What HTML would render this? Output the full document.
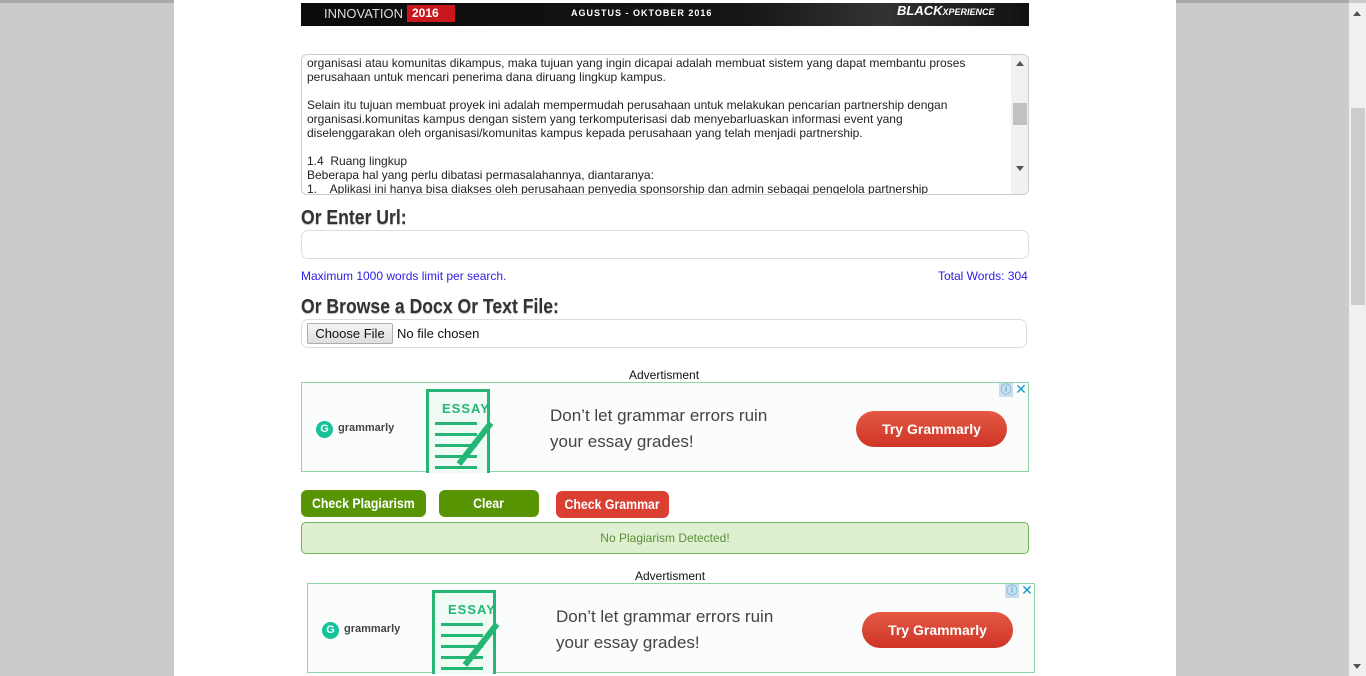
<!DOCTYPE html>
<html><head><meta charset="utf-8"><style>
*{margin:0;padding:0;box-sizing:border-box}
body{width:1366px;height:676px;overflow:hidden;background:#cbcbcb;font-family:"Liberation Sans",Arial,sans-serif;position:relative}
.a{position:absolute}
#page{left:174px;top:0;width:1002px;height:676px;background:#fff}
#topline{left:0;top:0;width:1349px;height:3px;background:#aaa}
#sb{left:1349px;top:3px;width:17px;height:673px;background:#f0f0f0}
.h{font-weight:bold;font-size:20px;color:#333;transform-origin:left top;transform:scaleX(0.88);white-space:nowrap;text-shadow:0 1px 1px #bbb}
.ad{border:1px solid #8fd3a8;background:#fbfdfc;width:728px;height:90px}
.btn{border-radius:6px;color:#fff;font-weight:bold;font-size:14px;text-align:center;line-height:27px;height:27px}
.btn span{display:inline-block;transform:scaleX(0.88)}
</style></head><body>
<div id="topline" class="a"></div>
<div id="page" class="a"></div>
<div id="sb" class="a"><div class="a" style="left:4px;top:8px;width:0;height:0;border-left:4px solid transparent;border-right:4px solid transparent;border-bottom:5px solid #555"></div><div class="a" style="left:2px;top:105px;width:14px;height:197px;background:#cdcdcd"></div><div class="a" style="left:4px;top:661px;width:0;height:0;border-left:4px solid transparent;border-right:4px solid transparent;border-top:5px solid #555"></div></div>

<div class="a" style="left:301px;top:3px;width:728px;height:23px;background:linear-gradient(90deg,#0b0b0b,#151515 60%,#333 80%,#111)">
<div class="a" style="left:23px;top:3px;color:#ddd;font-size:13px">INNOVATION</div>
<div class="a" style="left:106px;top:2px;width:48px;height:17px;background:#c8171d;color:#fff;font-weight:bold;font-size:12px;padding-left:5px;line-height:17px">2016</div>
<div class="a" style="left:270px;top:5px;color:#fff;font-weight:bold;font-size:9px;letter-spacing:1px">AGUSTUS - OKTOBER 2016</div>
<div class="a" style="left:596px;top:0px;color:#fff;font-weight:bold;font-style:italic;font-size:13px">BLACK<span style="font-size:9px">XPERIENCE</span></div>
</div>

<div class="a" style="left:301px;top:54px;width:728px;height:141px;border:1px solid #ccc;border-radius:6px;overflow:hidden;font-size:12px;line-height:14px;color:#222">
<div class="a" style="left:5px;top:1px;width:660px">organisasi atau komunitas dikampus, maka tujuan yang ingin dicapai adalah membuat sistem yang dapat membantu proses perusahaan untuk mencari penerima dana diruang lingkup kampus.<br><br>Selain itu tujuan membuat proyek ini adalah mempermudah perusahaan untuk melakukan pencarian partnership dengan organisasi.komunitas kampus dengan sistem yang terkomputerisasi dab menyebarluaskan informasi event yang diselenggarakan oleh organisasi/komunitas kampus kepada perusahaan yang telah menjadi partnership.<br><br>1.4&nbsp; Ruang lingkup<br>Beberapa hal yang perlu dibatasi permasalahannya, diantaranya:<br>1.&nbsp;&nbsp;&nbsp; Aplikasi ini hanya bisa diakses oleh perusahaan penyedia sponsorship dan admin sebagai pengelola partnership dengan</div>
<div class="a" style="left:709px;top:0;width:18px;height:140px;background:#f1f1f1"><div class="a" style="left:5px;top:6px;border-left:4px solid transparent;border-right:4px solid transparent;border-bottom:5px solid #555"></div><div class="a" style="left:2px;top:48px;width:14px;height:22px;background:#c1c1c1"></div><div class="a" style="left:5px;top:111px;border-left:4px solid transparent;border-right:4px solid transparent;border-top:5px solid #555"></div></div>
</div>

<div class="a h" style="left:301px;top:207px">Or Enter Url:</div>
<div class="a" style="left:301px;top:230px;width:728px;height:29px;border:1px solid #ddd;border-radius:7px"></div>
<div class="a" style="left:301px;top:269px;font-size:12px;color:#2a1ee6">Maximum 1000 words limit per search.</div>
<div class="a" style="left:938px;top:269px;font-size:12px;color:#2a1ee6">Total Words: 304</div>
<div class="a h" style="left:301px;top:296px">Or Browse a Docx Or Text File:</div>
<div class="a" style="left:301px;top:319px;width:726px;height:29px;border:1px solid #ddd;border-radius:7px"></div>
<div class="a" style="left:307px;top:323px;width:86px;height:21px;border:1px solid #adadad;border-radius:2px;background:linear-gradient(#f4f4f4,#dedede);font-size:13px;line-height:19px;text-align:center;color:#111">Choose File</div>
<div class="a" style="left:397px;top:326px;font-size:13px;color:#111">No file chosen</div>

<div class="a" style="left:629px;top:368px;font-size:12px;color:#111">Advertisment</div>
<div class="a ad" style="left:301px;top:382px">
<div class="a" style="left:14px;top:38px;width:17px;height:17px;border-radius:50%;background:#15c39a;color:#fff;font-weight:bold;font-size:11px;text-align:center;line-height:17px">G</div>
<div class="a" style="left:36px;top:39px;font-size:11px;font-weight:bold;color:#444">grammarly</div>
<div class="a" style="left:124px;top:6px;width:64px;height:84px;border:3px solid #25b574;border-bottom:none;background:#f0fbf5"></div>
<div class="a" style="left:140px;top:18px;color:#25b574;font-weight:bold;font-size:13px;letter-spacing:1px">ESSAY</div>
<div class="a" style="left:133px;top:39px;width:42px;height:3px;background:#25b574;box-shadow:0 11px 0 #25b574,0 22px 0 #25b574,0 33px 0 #25b574,0 44px 0 #25b574"></div>
<div class="a" style="left:186px;top:40px;width:6px;height:52px;background:#25b574;transform:rotate(38deg);transform-origin:top"></div>
<div class="a" style="left:248px;top:20px;font-size:17px;line-height:26px;color:#444">Don’t let grammar errors ruin<br>your essay grades!</div>
<div class="a" style="left:554px;top:28px;width:151px;height:36px;border-radius:18px;background:linear-gradient(#e35a44,#cf3426);color:#fff;font-weight:bold;font-size:14px;text-align:center;line-height:36px">Try Grammarly</div>
<div class="a" style="left:697px;top:0;width:14px;height:14px;background:#cde;color:#19c;font-size:11px;text-align:center;line-height:14px">ⓘ</div>
<div class="a" style="left:712px;top:-1px;width:14px;height:14px;color:#19c;font-size:14px;text-align:center;line-height:14px">✕</div>
</div>

<div class="a btn" style="left:301px;top:490px;width:125px;background:#579505"><span>Check Plagiarism</span></div>
<div class="a btn" style="left:439px;top:490px;width:100px;background:#579505"><span>Clear</span></div>
<div class="a btn" style="left:556px;top:491px;width:113px;background:#db3f31"><span>Check Grammar</span></div>
<div class="a" style="left:301px;top:522px;width:728px;height:32px;border:1px solid #6fb35a;border-radius:5px;background:#dff0d0;color:#5a8f3a;font-size:12px;text-align:center;line-height:30px">No Plagiarism Detected!</div>

<div class="a" style="left:635px;top:569px;font-size:12px;color:#111">Advertisment</div>
<div class="a ad" style="left:307px;top:583px">
<div class="a" style="left:14px;top:38px;width:17px;height:17px;border-radius:50%;background:#15c39a;color:#fff;font-weight:bold;font-size:11px;text-align:center;line-height:17px">G</div>
<div class="a" style="left:36px;top:39px;font-size:11px;font-weight:bold;color:#444">grammarly</div>
<div class="a" style="left:124px;top:6px;width:64px;height:84px;border:3px solid #25b574;border-bottom:none;background:#f0fbf5"></div>
<div class="a" style="left:140px;top:18px;color:#25b574;font-weight:bold;font-size:13px;letter-spacing:1px">ESSAY</div>
<div class="a" style="left:133px;top:39px;width:42px;height:3px;background:#25b574;box-shadow:0 11px 0 #25b574,0 22px 0 #25b574,0 33px 0 #25b574,0 44px 0 #25b574"></div>
<div class="a" style="left:186px;top:40px;width:6px;height:52px;background:#25b574;transform:rotate(38deg);transform-origin:top"></div>
<div class="a" style="left:248px;top:20px;font-size:17px;line-height:26px;color:#444">Don’t let grammar errors ruin<br>your essay grades!</div>
<div class="a" style="left:554px;top:28px;width:151px;height:36px;border-radius:18px;background:linear-gradient(#e35a44,#cf3426);color:#fff;font-weight:bold;font-size:14px;text-align:center;line-height:36px">Try Grammarly</div>
<div class="a" style="left:697px;top:0;width:14px;height:14px;background:#cde;color:#19c;font-size:11px;text-align:center;line-height:14px">ⓘ</div>
<div class="a" style="left:712px;top:-1px;width:14px;height:14px;color:#19c;font-size:14px;text-align:center;line-height:14px">✕</div>
</div>
</body></html>
